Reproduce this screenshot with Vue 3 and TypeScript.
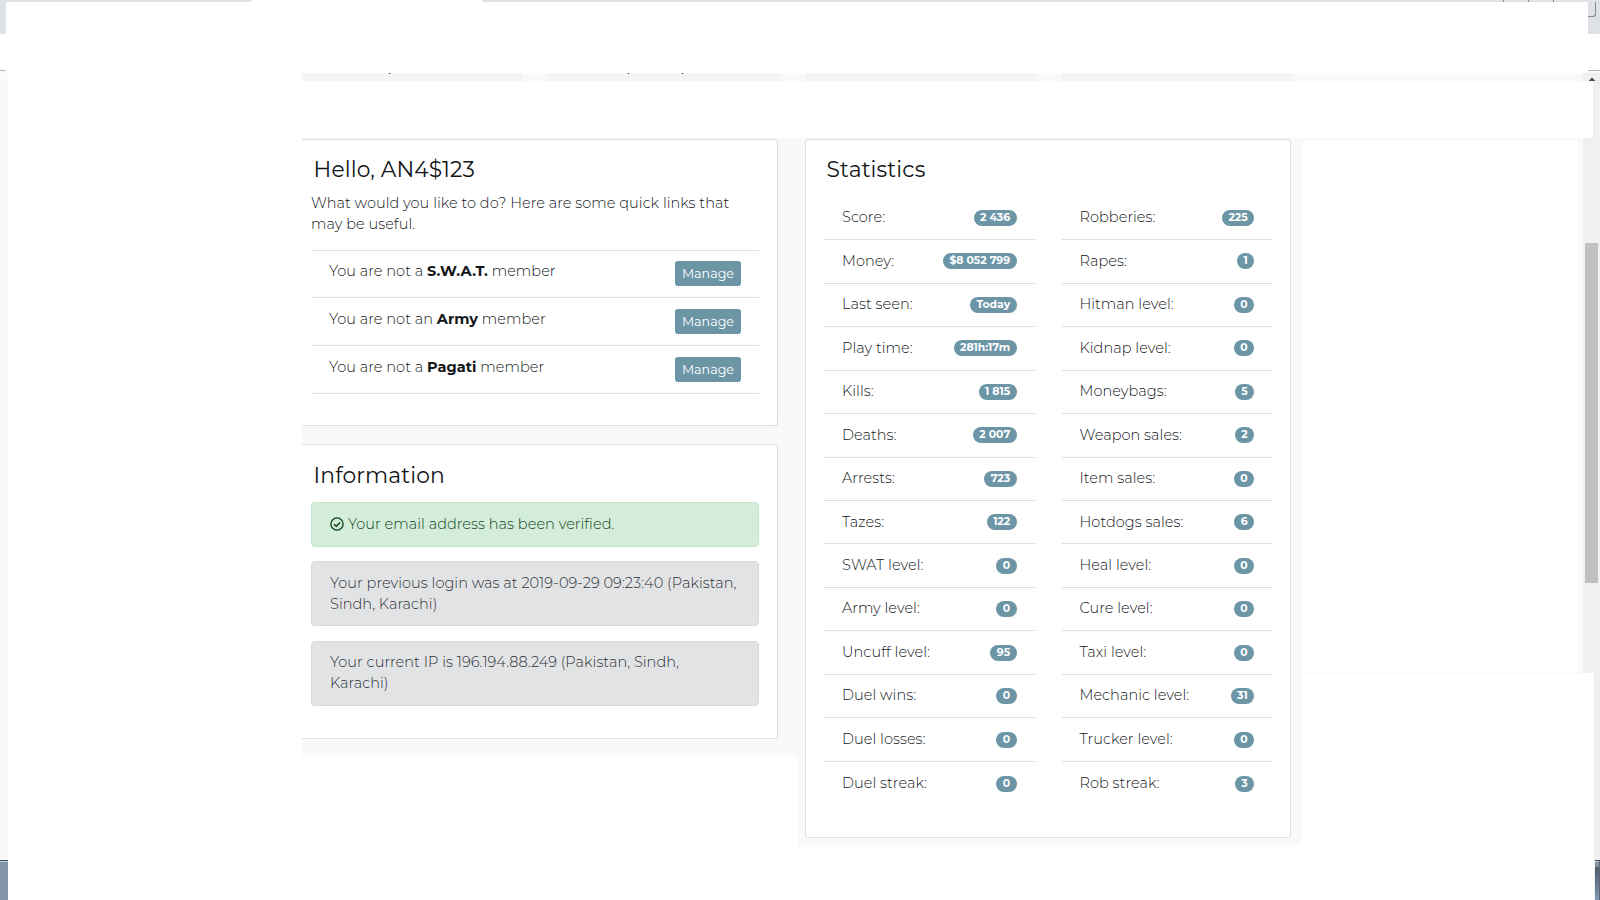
<script setup lang="ts">
interface Stat {
  label: string
  value: string
}

const memberships = [
  { article: 'a', group: 'S.W.A.T.' },
  { article: 'an', group: 'Army' },
  { article: 'a', group: 'Pagati' },
]

const personalStats: Stat[] = [
  { label: 'Score:', value: '2 436' },
  { label: 'Money:', value: '$8 052 799' },
  { label: 'Last seen:', value: 'Today' },
  { label: 'Play time:', value: '281h:17m' },
  { label: 'Kills:', value: '1 815' },
  { label: 'Deaths:', value: '2 007' },
  { label: 'Arrests:', value: '723' },
  { label: 'Tazes:', value: '122' },
  { label: 'SWAT level:', value: '0' },
  { label: 'Army level:', value: '0' },
  { label: 'Uncuff level:', value: '95' },
  { label: 'Duel wins:', value: '0' },
  { label: 'Duel losses:', value: '0' },
  { label: 'Duel streak:', value: '0' },
]

const activityStats: Stat[] = [
  { label: 'Robberies:', value: '225' },
  { label: 'Rapes:', value: '1' },
  { label: 'Hitman level:', value: '0' },
  { label: 'Kidnap level:', value: '0' },
  { label: 'Moneybags:', value: '5' },
  { label: 'Weapon sales:', value: '2' },
  { label: 'Item sales:', value: '0' },
  { label: 'Hotdogs sales:', value: '6' },
  { label: 'Heal level:', value: '0' },
  { label: 'Cure level:', value: '0' },
  { label: 'Taxi level:', value: '0' },
  { label: 'Mechanic level:', value: '31' },
  { label: 'Trucker level:', value: '0' },
  { label: 'Rob streak:', value: '3' },
]

const columns = [personalStats, activityStats]
</script>

<template>
  <div class="screen">
    <!-- window frame -->
    <header class="chrome">
      <div class="tabs">
        <div class="tab" />
        <div class="controls">
          <i /><i /><i />
        </div>
      </div>
      <div class="toolbar">
        <div class="edge edge-left" />
        <div class="toolbar-body" />
        <div class="edge edge-right">
          <div class="control-corner" />
        </div>
      </div>
    </header>

    <div class="viewport">
      <div class="left-rail">
        <div class="desktop" />
      </div>

      <main class="page">
        <div class="tiles">
          <div class="tile tile-first">
            <i class="speck speck-a" />
          </div>
          <div class="tile">
            <i class="speck speck-b" /><i class="speck speck-c" />
          </div>
          <div class="tile" />
          <div class="tile" />
        </div>
        <div class="blank-band" />

        <div class="board">
          <div class="left-column">
            <section class="card card-hello">
              <h4>Hello, AN4$123</h4>
              <p class="intro">
                What would you like to do? Here are some quick links that<br>may be useful.
              </p>
              <ul class="links">
                <li v-for="m in memberships" :key="m.group">
                  <span>You are not {{ m.article }} <b>{{ m.group }}</b> member</span>
                  <button type="button">
                    Manage
                  </button>
                </li>
              </ul>
            </section>

            <section class="card card-info">
              <h4>Information</h4>
              <div class="alert alert-success">
                <svg class="check" viewBox="0 0 16 16" fill="none" stroke="currentColor">
                  <circle cx="8" cy="8" r="7" stroke-width="1.5" />
                  <path d="M4.6 8.2 7.1 10.6 11.5 6.2" stroke-width="1.7" />
                </svg>
                <span>Your email address has been verified.</span>
              </div>
              <div class="alert">
                Your previous login was at 2019-09-29 09:23:40 (Pakistan,<br>Sindh, Karachi)
              </div>
              <div class="alert alert-ip">
                Your current IP is 196.194.88.249 (Pakistan, Sindh,<br>Karachi)
              </div>
            </section>
          </div>

          <div class="right-column">
            <section class="card card-stats">
              <h4>Statistics</h4>
              <div class="stat-columns">
                <ul v-for="(column, index) in columns" :key="index" class="stats">
                  <li v-for="stat in column" :key="stat.label">
                    <span>{{ stat.label }}</span>
                    <span class="badge">{{ stat.value }}</span>
                  </li>
                </ul>
              </div>
            </section>
          </div>

          <div class="side-blank" />
        </div>
      </main>

      <aside class="scrollbar">
        <svg class="arrow" viewBox="0 0 6 3">
          <path d="M2 0H4V1H5V2H6V3H0V2H1V1H2Z" fill="#505050" />
        </svg>
        <div class="cover cover-top" />
        <div class="thumb" />
        <div class="cover cover-bottom" />
        <div class="desktop desktop-right" />
      </aside>
    </div>
  </div>
</template>

<style>
body {
  margin: 0;
  overflow: hidden;
}
</style>

<style scoped>
.screen {
  width: 1600px;
  height: 900px;
  overflow: hidden;
  background: #fff;
  color: #121518;
  font-family: Montserrat, Inter, "Open Sans", sans-serif;
  font-size: 14.5px;
  font-weight: 300;
  line-height: 21.3px;
  letter-spacing: 0.045px;
}

.screen * {
  box-sizing: border-box;
}

.chrome {
  height: 73px;
}

.tabs {
  display: flex;
  justify-content: space-between;
  height: 2px;
  background: #dee1e6;
}

.tab {
  width: 232px;
  margin-left: 251px;
  background: #fff;
  border-radius: 2px 2px 0 0;
}

.controls {
  display: flex;
  width: 97px;
  background: #e2e1e6;
}

.controls i {
  width: 25px;
  border-left: 1px solid #84868b;
}

.toolbar {
  display: flex;
  height: 71px;
}

.edge {
  background: linear-gradient(#dee1e6 32px, #fff 32px, #fff 68px, #b6b4b6 68px, #b6b4b6 69px, #f9f9f9 69px);
}

.edge-left {
  width: 6px;
}

.edge-right {
  width: 12px;
}

.toolbar-body {
  flex: 1;
}

.control-corner {
  width: 8px;
  height: 15px;
  border: solid #84868b;
  border-width: 0 1px 1px 0;
  border-radius: 0 0 3px 0;
}

.viewport {
  display: flex;
  height: 827px;
}

.left-rail {
  display: flex;
  align-items: flex-end;
  width: 8px;
  background: #f9f9f9;
}

.desktop {
  width: 100%;
  height: 40px;
  border-top: 1px solid #3f4a59;
  background: linear-gradient(#c5d5e3 1px, #8495aa 1px);
}

.page {
  width: 1575px;
  padding-left: 294px;
}

.tiles {
  display: flex;
  gap: 27px;
  height: 8px;
  background: #f9f9f9;
}

.tile {
  position: relative;
  width: 229.5px;
  background: #f4f4f4;
}

.tile-first {
  width: 220px;
}

.speck {
  position: absolute;
  top: 0;
  width: 2px;
  height: 1px;
  background: linear-gradient(90deg, #4a3038 50%, #b9cce0 50%);
}

.speck-a {
  left: 87px;
}

.speck-b {
  left: 79px;
}

.speck-c {
  left: 133px;
}

.blank-band {
  height: 57px;
}

.board {
  display: flex;
  align-items: flex-start;
  height: 535px;
  background: #f9f9f9;
}

.left-column {
  width: 496px;
  height: 618px;
  padding-top: 1px;
  background: #f9f9f9;
}

.right-column {
  width: 505px;
  height: 707px;
  padding: 1px 0 0 7px;
  background: linear-gradient(90deg, #f9f9f9 503px, transparent 503px);
}

.side-blank {
  width: 275px;
  height: 532px;
  margin-top: 2px;
  background: #fff;
}

.card {
  border: 1px solid #dfdfdf;
  border-radius: 3px;
  background: #fff;
}

.left-column .card {
  width: 476px;
  padding: 17px 18px 0 9px;
  border-left: 0;
  border-radius: 0 3px 3px 0;
}

.left-column .card-hello {
  height: 287px;
  margin-bottom: 18px;
  padding-top: 16px;
}

.card-info {
  height: 295px;
}

.card-stats {
  width: 486px;
  height: 699px;
  padding: 16px 18px 0;
}

h4 {
  margin: 0;
  padding-left: 2.6px;
  font-size: 21.8px;
  font-weight: 400;
  line-height: 26px;
  letter-spacing: 0.12px;
}

.intro {
  margin: 11px 0 14px;
}

ul {
  margin: 0;
  padding: 0;
  list-style: none;
}

.links {
  border-top: 1px solid #dfdfdf;
}

.links li {
  display: flex;
  justify-content: space-between;
  align-items: flex-start;
  height: 47.8px;
  padding: 10.4px 18px 0;
  border-bottom: 1px solid #dfdfdf;
}

.links b {
  font-weight: 700;
}

button {
  width: 66px;
  height: 25px;
  padding: 0;
  border: 0;
  border-radius: 3px;
  background: #6c95a6;
  color: #fff;
  font-family: inherit;
  font-size: 12.7px;
  font-weight: 400;
  line-height: 25px;
}

.alert {
  margin-bottom: 14.8px;
  padding: 10.6px 18px;
  border: 1px solid #d6d8db;
  border-radius: 4px;
  background: #e2e3e5;
  color: #2b3034;
  line-height: 21px;
  white-space: nowrap;
}

.alert-success {
  display: flex;
  align-items: center;
  gap: 4px;
  margin: 14px 0 14.2px;
  padding-bottom: 11.2px;
  border-color: #c3e6cb;
  background: #d4edda;
  color: #0c4519;
}

.alert-ip {
  padding: 10px 18px 11.2px;
}

.check {
  width: 14px;
  height: 14px;
}

.stat-columns {
  display: flex;
  gap: 27px;
  margin-top: 14.7px;
}

.stats {
  flex: 1;
}

.stats li {
  display: flex;
  justify-content: space-between;
  align-items: center;
  height: 43.48px;
  padding: 0 18px;
  border-bottom: 1px solid #dfdfdf;
}

.stats li:last-child {
  border-bottom: 0;
}

.badge {
  height: 16px;
  padding: 0 6.4px;
  border-radius: 8px;
  background: #6c95a6;
  color: #fff;
  font-size: 10.8px;
  font-weight: 700;
  line-height: 15px;
  letter-spacing: 0;
}

.scrollbar {
  position: relative;
  width: 17px;
  background: #f0f0f0;
}

.arrow {
  position: absolute;
  top: 5px;
  left: 6px;
  width: 6px;
  height: 3px;
}

.cover {
  position: absolute;
  left: 0;
  background: #fff;
}

.cover-top {
  top: 8px;
  width: 10px;
  height: 57px;
}

.cover-bottom {
  top: 600px;
  width: 11px;
  height: 227px;
}

.thumb {
  position: absolute;
  top: 170px;
  left: 2px;
  width: 13px;
  height: 340px;
  background: #c1c1c1;
}

.desktop-right {
  position: absolute;
  right: 0;
  bottom: 0;
  width: 5px;
  border-right: 1px solid #5d6877;
  background: linear-gradient(#c5cfd8 1px, #87919b 1px, #87919b 6px, #4d5b6d 6px, #8297b3);
}
</style>
